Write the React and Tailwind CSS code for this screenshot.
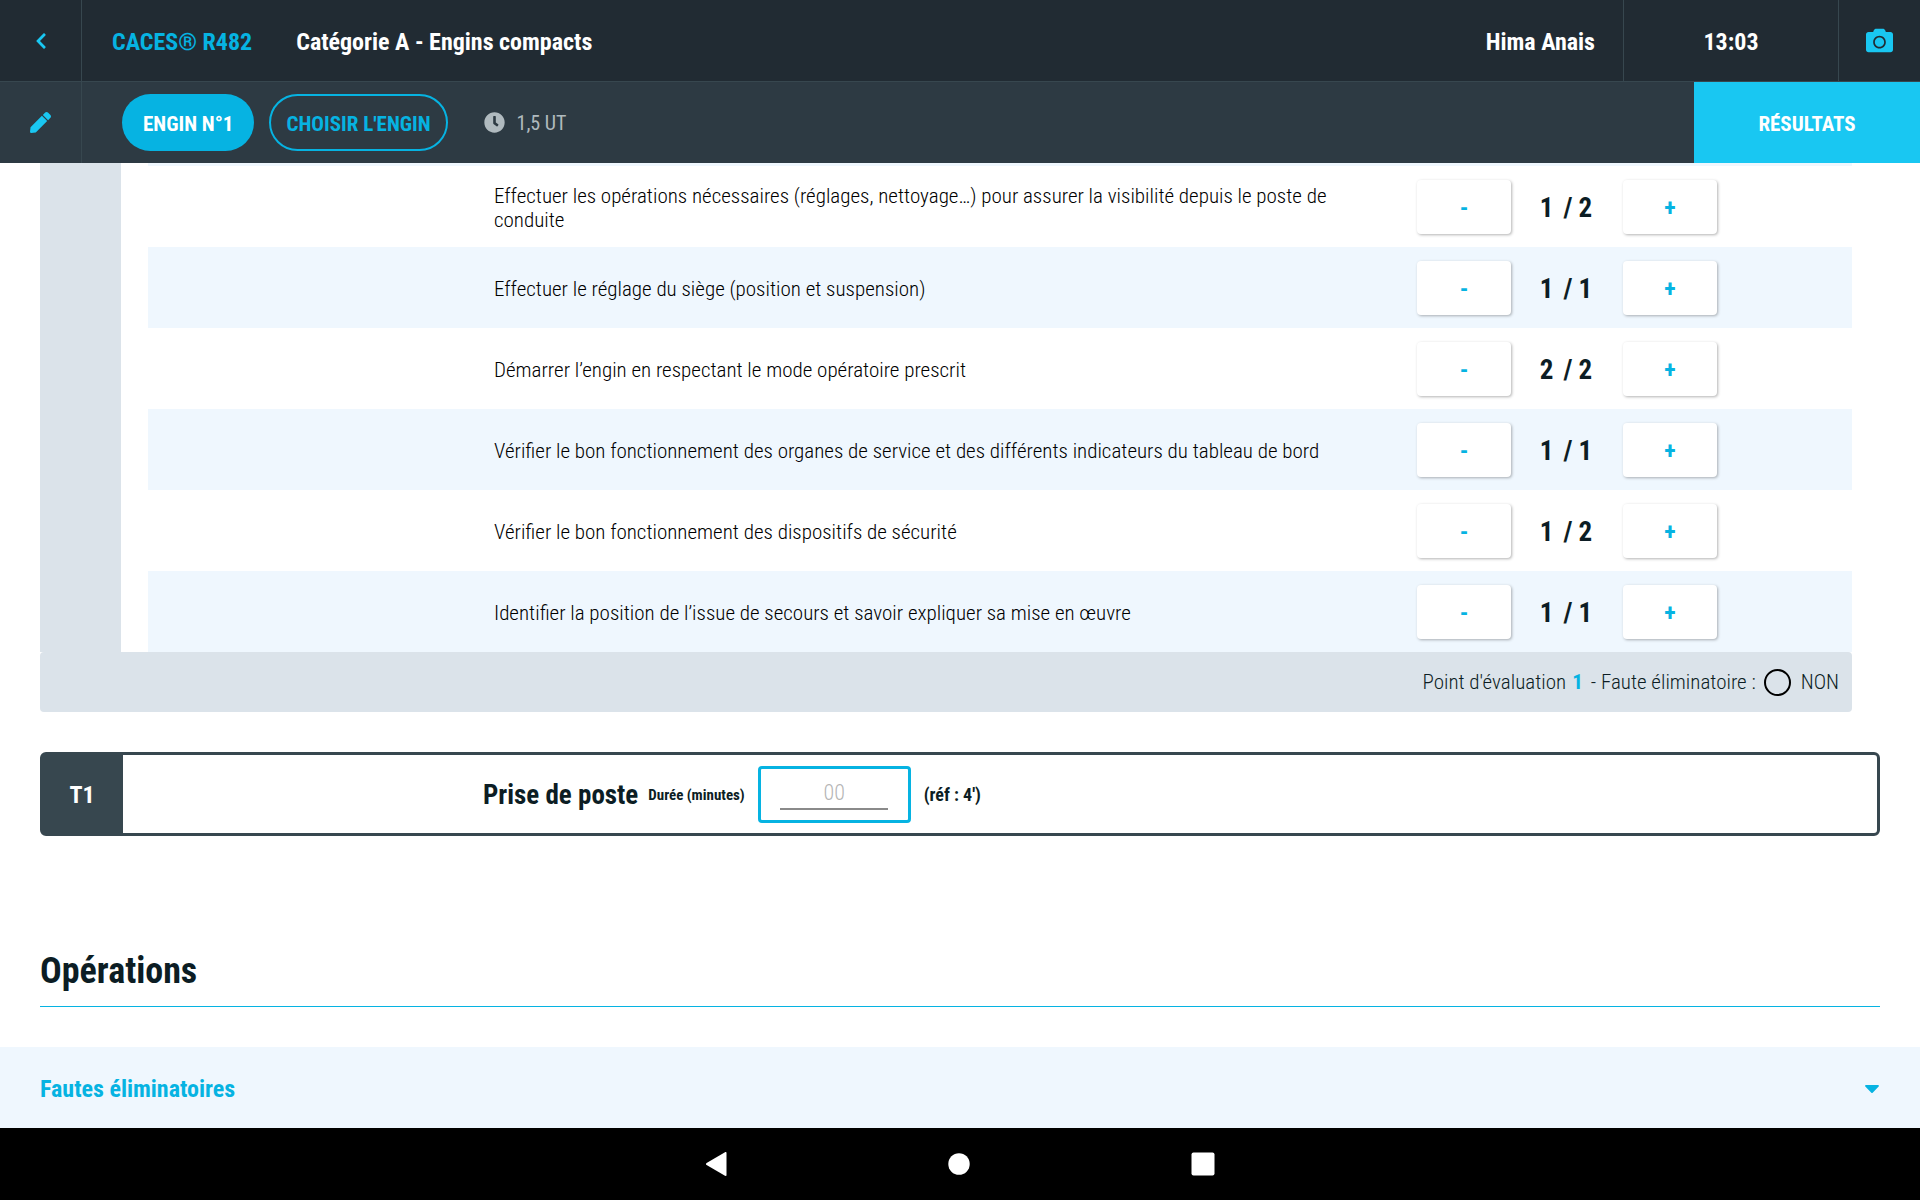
import React, { useState } from "react";
import {
  FaCamera,
  FaCaretDown,
  FaChevronLeft,
  FaClock,
  FaPen,
} from "react-icons/fa";

const criteria = [
  {
    label:
      "Effectuer les opérations nécessaires (réglages, nettoyage…) pour assurer la visibilité depuis le poste de conduite",
    score: 1,
    max: 2,
  },
  {
    label: "Effectuer le réglage du siège (position et suspension)",
    score: 1,
    max: 1,
  },
  {
    label: "Démarrer l’engin en respectant le mode opératoire prescrit",
    score: 2,
    max: 2,
  },
  {
    label:
      "Vérifier le bon fonctionnement des organes de service et des différents indicateurs du tableau de bord",
    score: 1,
    max: 1,
  },
  {
    label: "Vérifier le bon fonctionnement des dispositifs de sécurité",
    score: 1,
    max: 2,
  },
  {
    label:
      "Identifier la position de l’issue de secours et savoir expliquer sa mise en œuvre",
    score: 1,
    max: 1,
  },
];

const StepButton = ({ children, ...props }) => (
  <button
    className="h-[54px] w-[94px] rounded bg-white pt-0.5 text-2xl font-bold text-[#06b3e2] shadow-[1px_1px_3px_rgba(0,0,0,0.3)]"
    {...props}
  >
    {children}
  </button>
);

const CriterionRow = ({ label, score, max }) => {
  const [value, setValue] = useState(score);

  return (
    <tr className="h-[81px] even:bg-[#eff7fe]">
      <td className="w-[346px]"></td>
      <td className="pt-4 pr-6 pb-3.5 text-[21px] leading-6 font-light text-black">
        {label}
      </td>
      <td className="w-[435px]">
        <div className="flex items-center">
          <StepButton onClick={() => setValue(Math.max(0, value - 1))}>
            -
          </StepButton>
          <div className="flex w-28 justify-center gap-2.5 pt-1 pr-0.5 text-[27px] font-bold">
            <span>{value}</span>
            <span>/ {max}</span>
          </div>
          <StepButton onClick={() => setValue(Math.min(max, value + 1))}>
            +
          </StepButton>
        </div>
      </td>
    </tr>
  );
};

const Header = () => (
  <header className="text-white">
    {/* title bar */}
    <div className="flex h-[82px] border-b border-[#37474f] bg-[#212b33]">
      <button
        aria-label="Retour"
        className="flex w-[82px] items-center justify-center border-r border-[#37474f] text-lg text-[#19c7f2]"
      >
        <FaChevronLeft />
      </button>
      <div className="flex flex-1 items-center gap-11 pt-0.5 pr-7 pl-[30px] text-2xl font-bold">
        <span className="text-[#06b3e2]">CACES® R482</span>
        <h1>Catégorie A - Engins compacts</h1>
        <span className="ml-auto">Hima Anais</span>
      </div>
      <div className="flex w-[216px] items-center justify-center border-x border-[#37474f] pt-0.5 text-2xl font-bold">
        13:03
      </div>
      <button
        aria-label="Photo"
        className="flex w-[81px] items-center justify-center text-[27px] text-[#19c7f2]"
      >
        <FaCamera />
      </button>
    </div>

    {/* engine bar */}
    <div className="flex h-[81px] bg-[#2d3a43]">
      <button
        aria-label="Modifier"
        className="flex w-[82px] items-center justify-center border-r border-[#37474f] text-[21px] text-[#19c7f2]"
      >
        <FaPen />
      </button>
      <div className="flex flex-1 items-center pl-10">
        <button className="h-[57px] rounded-full bg-[#06b3e2] px-[21px] pt-1 text-[21px] font-bold">
          ENGIN N°1
        </button>
        <button className="ml-[15px] h-[57px] rounded-full border-2 border-[#06b3e2] px-[15px] pt-1 text-[21px] font-bold text-[#06b3e2]">
          CHOISIR L'ENGIN
        </button>
        <span className="ml-9 flex items-center gap-3 text-xl text-[#b0babf]">
          <FaClock className="text-[21px]" />
          1,5 UT
        </span>
      </div>
      <button className="w-[226px] bg-[#19c7f2] pt-1 text-[21px] font-bold">
        RÉSULTATS
      </button>
    </div>
  </header>
);

const NavBar = () => (
  <nav className="flex h-[72px] items-center justify-center gap-[221px] bg-black">
    <button aria-label="Précédent">
      <svg width="22" height="26" viewBox="0 0 22 26" fill="#fff">
        <path d="M20 1.2 1.6 11.9c-.8.5-.8 1.7 0 2.2L20 24.8c.7.4 1.5 0 1.5-.8V2c0-.8-.8-1.2-1.5-.8z" />
      </svg>
    </button>
    <button aria-label="Accueil">
      <svg width="22" height="24" viewBox="0 0 22 24" fill="#fff">
        <ellipse cx="11" cy="12" rx="10.7" ry="10.8" />
      </svg>
    </button>
    <button aria-label="Applications récentes">
      <svg width="24" height="24" viewBox="0 0 24 24" fill="#fff">
        <rect x="0.5" y="0.5" width="23" height="23" rx="2" />
      </svg>
    </button>
  </nav>
);

const App = () => {
  return (
    <div className="flex min-h-screen flex-col bg-white font-['Roboto_Condensed','Roboto',sans-serif] text-[#0c1d24]">
      <Header />

      <main className="flex-1">
        {/* evaluation criteria */}
        <section className="mr-[68px] ml-10">
          <div className="flex">
            <div className="w-[81px] shrink-0 bg-[#dbe3ea]"></div>
            <div className="ml-[27px] flex-1">
              <div className="h-[3px] bg-[#eff7fe]"></div>
              <table className="w-full">
                <tbody>
                  {criteria.map((item) => (
                    <CriterionRow key={item.label} {...item} />
                  ))}
                </tbody>
              </table>
            </div>
          </div>
          <div className="flex h-[60px] items-center justify-end rounded bg-[#dbe3ea] pr-[13px] text-[21px] font-light">
            <span className="pt-0.5">
              Point d'évaluation
              <span className="mr-2 ml-1.5 font-bold text-[#06b3e2]">1</span>
              - Faute éliminatoire :
            </span>
            <label className="ml-2 flex items-center gap-2.5">
              <input
                type="checkbox"
                className="size-[27px] appearance-none rounded-full border-2 border-black checked:bg-[#06b3e2]"
              />
              <span className="pt-0.5">NON</span>
            </label>
          </div>
        </section>

        {/* task duration */}
        <section className="mx-10 mt-10 flex h-[84px] rounded-md border-3 border-[#37474f] font-bold">
          <div className="flex w-20 items-center justify-center bg-[#37474f] pt-0.5 pr-0.5 text-2xl text-white">
            T1
          </div>
          <div className="flex flex-1 items-center pl-[360px]">
            <h2 className="pt-0.5 text-[27px]">Prise de poste</h2>
            <label htmlFor="duration" className="ml-2.5 pt-0.5 text-[15px]">
              Durée (minutes)
            </label>
            <div className="mx-[13px] flex h-[57px] w-[153px] justify-center rounded border-3 border-[#06b3e2] pt-2 pb-2.5">
              <input
                id="duration"
                type="text"
                placeholder="00"
                className="w-[108px] border-b-2 border-[#8a8a8a] text-center text-[22px] font-light outline-none placeholder:text-[#b5b5b5]"
              />
            </div>
            <span className="pt-0.5 text-lg">(réf : 4')</span>
          </div>
        </section>

        <h2 className="mx-10 mt-[110px] border-b border-[#06b3e2] pb-2.5 text-4xl leading-[50px] font-bold">
          Opérations
        </h2>

        <button className="mt-10 flex h-[81px] w-full items-center justify-between bg-[#eff7fe] pr-9 pl-10 text-2xl font-bold text-[#06b3e2]">
          <span className="pt-0.5">Fautes éliminatoires</span>
          <FaCaretDown />
        </button>
      </main>

      <NavBar />
    </div>
  );
};

export default App;
